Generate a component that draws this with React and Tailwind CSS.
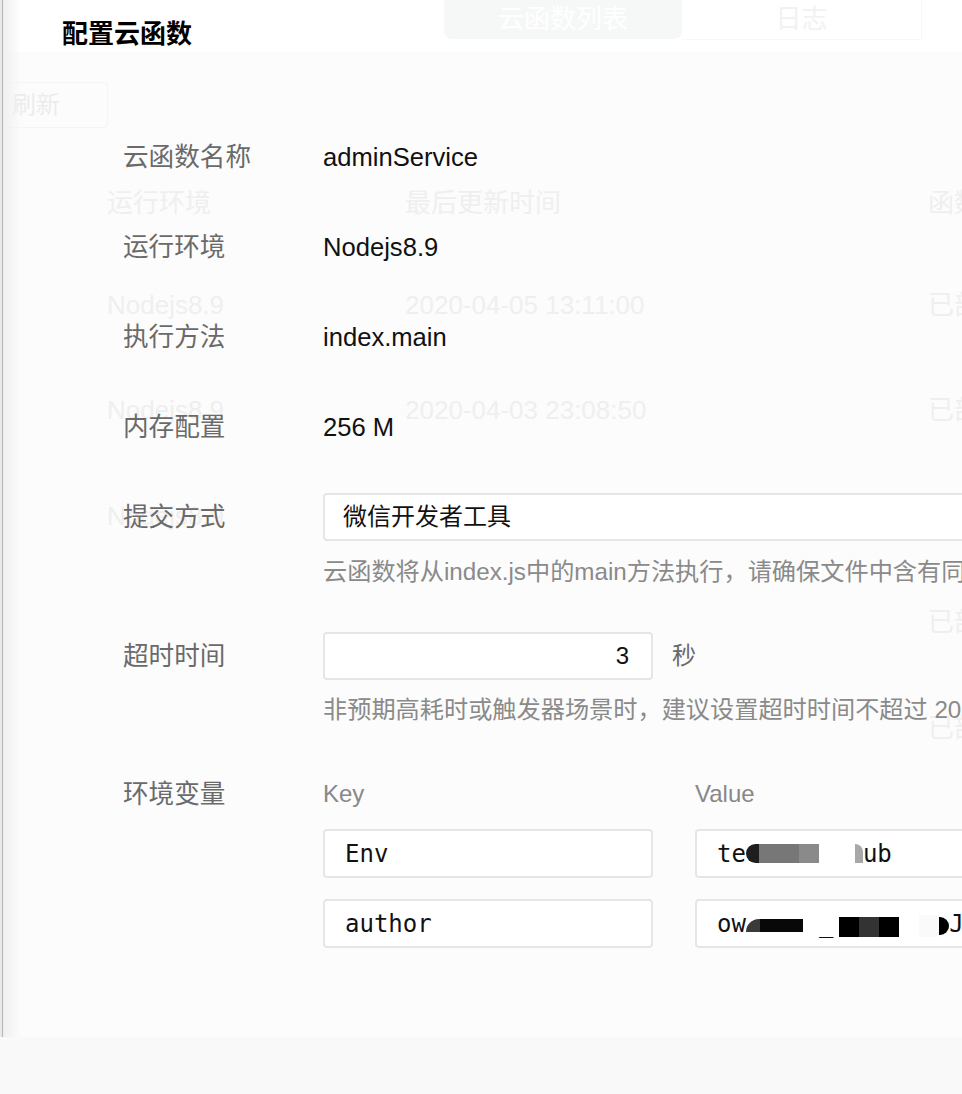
export default function App() {
  const sans = "font-[family-name:'Liberation_Sans','Noto_Sans_CJK_SC',sans-serif]";
  const mono = "font-[family-name:'DejaVu_Sans_Mono','Noto_Sans_CJK_SC',monospace]";
  return (
    <div className={"relative h-[1094px] w-[962px] overflow-hidden bg-white " + sans}>
      {/* page behind the drawer */}
      <div className="flex h-full flex-col">
        <div className="h-[52px] border-l-2 border-[#e9e9e9] bg-white">
          <div className="flex pl-[442px]">
            <div className="flex h-[39px] w-[238px] items-center justify-center rounded-b-[8px] bg-[#f6f8f8] text-[26px] text-white">
              云函数列表
            </div>
            <div className="flex h-[40px] w-[240px] items-center justify-center border-b border-r border-[#f8f8f8] text-[26px] text-[#f2f2f2]">
              日志
            </div>
          </div>
        </div>
        <div className="flex-1 border-l-2 border-[#e9e9e9] bg-[#fcfcfc] pl-[1px] text-[26px] text-[#efefef]">
          <div className="mt-[30px] h-[46px] w-[105px] rounded-[4px] border border-[#f5f5f5] pl-[8px] text-[24px] leading-[44px] text-[#ececec]">
            刷新
          </div>
          <div className="mt-[25px]">
            <div className="grid h-[100px] grid-cols-[298px_523px_1fr] items-center whitespace-nowrap pl-[104px]">
              <span>运行环境</span>
              <span>最后更新时间</span>
              <span>函数状态</span>
            </div>
            <div className="grid h-[104px] grid-cols-[298px_523px_1fr] items-center whitespace-nowrap pl-[104px]">
              <span>Nodejs8.9</span>
              <span>2020-04-05 13:11:00</span>
              <span>已部署</span>
            </div>
            <div className="grid h-[106px] grid-cols-[298px_523px_1fr] items-center whitespace-nowrap pl-[104px]">
              <span>Nodejs8.9</span>
              <span>2020-04-03 23:08:50</span>
              <span>已部署</span>
            </div>
            <div className="grid h-[106px] grid-cols-[298px_523px_1fr] items-center whitespace-nowrap pl-[104px]">
              <span>Nodejs8.9</span>
              <span></span>
              <span>已部署</span>
            </div>
            <div className="grid h-[106px] grid-cols-[298px_523px_1fr] items-center whitespace-nowrap pl-[104px]">
              <span></span>
              <span></span>
              <span>已部署</span>
            </div>
            <div className="grid h-[106px] grid-cols-[298px_523px_1fr] items-center whitespace-nowrap pl-[104px]">
              <span></span>
              <span></span>
              <span>已部署</span>
            </div>
          </div>
        </div>
        <div className="h-[57px] bg-[#f9f9f9]" />
      </div>

      {/* drawer */}
      <div className="absolute inset-y-0 left-[2px] right-0 flex flex-col overflow-hidden">
        <div className="relative flex flex-1 flex-col border-l border-[#b5b5b5]">
          <div className="pointer-events-none absolute inset-y-0 left-0 w-[18px] bg-linear-to-r from-[#efefef] to-transparent" />
          <div className="relative h-[52px] pl-[59px] pt-[18px]">
            <h1 className="text-[26px] font-bold leading-[32px] text-black">配置云函数</h1>
          </div>
          <div className="relative flex flex-col gap-[42px] pl-[120px] pt-[81px] text-[25.6px]">
            <div className="flex">
              <div className="h-[48px] w-[200px] shrink-0 leading-[48px] text-[#6a6a6a]">云函数名称</div>
              <div className="leading-[48px] text-[#111]">adminService</div>
            </div>
            <div className="flex">
              <div className="h-[48px] w-[200px] shrink-0 leading-[48px] text-[#6a6a6a]">运行环境</div>
              <div className="leading-[48px] text-[#111]">Nodejs8.9</div>
            </div>
            <div className="flex">
              <div className="h-[48px] w-[200px] shrink-0 leading-[48px] text-[#6a6a6a]">执行方法</div>
              <div className="leading-[48px] text-[#111]">index.main</div>
            </div>
            <div className="flex">
              <div className="h-[48px] w-[200px] shrink-0 leading-[48px] text-[#6a6a6a]">内存配置</div>
              <div className="leading-[48px] text-[#111]">256 M</div>
            </div>
            <div className="flex">
              <div className="h-[48px] w-[200px] shrink-0 leading-[48px] text-[#6a6a6a]">提交方式</div>
              <div className="flex flex-col">
                <div className="flex h-[48px] w-[700px] items-center rounded-[4px] border-2 border-[#e6e6e6] bg-white pl-[18px] text-[24px] text-[#111]">
                  微信开发者工具
                </div>
                <div className="whitespace-nowrap pt-[13px] text-[24.2px] leading-[36px] text-[#8a8a8a]">
                  云函数将从index.js中的main方法执行，请确保文件中含有同名方法
                </div>
              </div>
            </div>
            <div className="flex">
              <div className="h-[48px] w-[200px] shrink-0 leading-[48px] text-[#6a6a6a]">超时时间</div>
              <div className="flex flex-col">
                <div className="flex items-center">
                  <div className="flex h-[48px] w-[330px] items-center justify-end rounded-[4px] border-2 border-[#e6e6e6] bg-white pr-[22px] text-[24px] text-[#111]">
                    3
                  </div>
                  <span className="ml-[19px] text-[24px] text-[#6a6a6a]">秒</span>
                </div>
                <div className="whitespace-nowrap pt-[12px] text-[24.2px] leading-[36px] text-[#8a8a8a]">
                  非预期高耗时或触发器场景时，建议设置超时时间不超过 20 秒
                </div>
              </div>
            </div>
            <div className="flex">
              <div className="h-[48px] w-[200px] shrink-0 leading-[48px] text-[#6a6a6a]">环境变量</div>
              <div className="flex flex-col">
                <div className="flex h-[48px] items-center gap-[42px] text-[24px] text-[#888]">
                  <span className="w-[330px]">Key</span>
                  <span className="w-[330px]">Value</span>
                </div>
                <div className={"mt-[11px] flex gap-[42px] text-[24px] text-[#111] " + mono}>
                  <div className="flex h-[49px] w-[330px] items-center rounded-[4px] border-2 border-[#e6e6e6] bg-white pl-[20px]">Env</div>
                  <div className="flex h-[49px] w-[330px] items-center whitespace-nowrap rounded-[4px] border-2 border-[#e6e6e6] bg-white pl-[20px]">
                    <span>te</span>
                    <span className="flex h-[19px] w-[73px]">
                      <span className="w-[13px] rounded-l-full bg-[#1e1e1e]" />
                      <span className="w-[40px] bg-[#777]" />
                      <span className="w-[20px] bg-[#8a8a8a]" />
                    </span>
                    <span className="w-[36px]" />
                    <span className="h-[19px] w-[8px] rounded-tr-full bg-[#a8a8a8]" />
                    <span>ub</span>
                  </div>
                </div>
                <div className={"mt-[21px] flex gap-[42px] text-[24px] text-[#111] " + mono}>
                  <div className="flex h-[49px] w-[330px] items-center rounded-[4px] border-2 border-[#e6e6e6] bg-white pl-[20px]">author</div>
                  <div className="flex h-[49px] w-[330px] items-center whitespace-nowrap rounded-[4px] border-2 border-[#e6e6e6] bg-white pl-[20px]">
                    <span>ow</span>
                    <span className="mt-[4px] flex h-[13px] w-[57px]">
                      <span className="w-[14px] rounded-tl-full bg-[#3a3a3a]" />
                      <span className="w-[43px] bg-[#080808]" />
                    </span>
                    <span className="w-[16px]" />
                    <span>_</span>
                    <span className="w-[6px]" />
                    <span className="mt-[6px] flex h-[20px] w-[60px]">
                      <span className="w-[20px] bg-black" />
                      <span className="w-[20px] bg-[#333]" />
                      <span className="w-[20px] bg-black" />
                    </span>
                    <span className="w-[20px]" />
                    <span className="mt-[4px] h-[22px] w-[20px] bg-[#fafafa]" />
                    <span className="mt-[4px] h-[18px] w-[10px] rounded-r-full bg-black" />
                    <span>J</span>
                  </div>
                </div>
              </div>
            </div>
          </div>
        </div>
        <div className="h-[57px] bg-[#f9f9f9]" />
      </div>
    </div>
  );
}
